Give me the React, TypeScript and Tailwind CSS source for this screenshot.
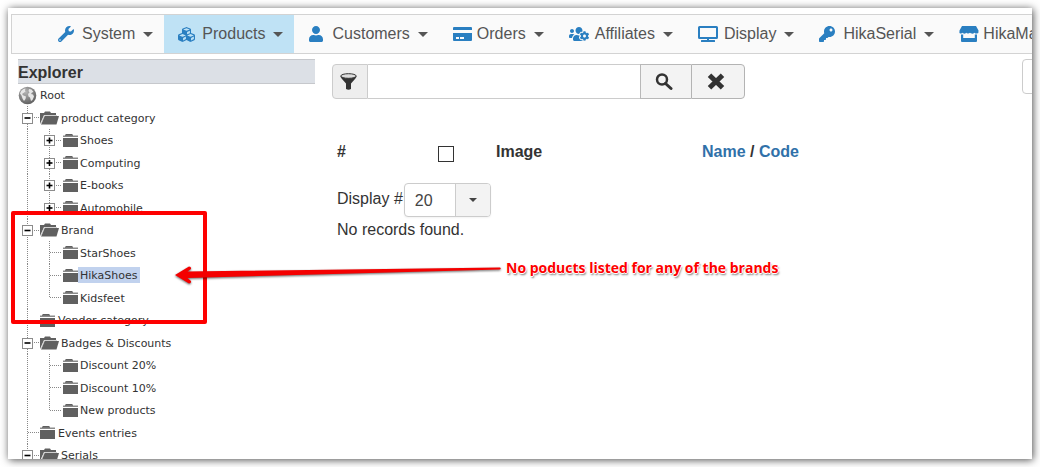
import type { ReactNode } from "react";
import {
  FaCubes,
  FaKey,
  FaTv,
  FaUser,
  FaUsersCog,
  FaWrench,
} from "react-icons/fa";

interface MenuItem {
  label: string;
  icon: ReactNode;
  active?: boolean;
  wide?: boolean;
}

interface TreeNode {
  label: string;
  depth: 1 | 2;
  toggle?: "open" | "closed";
  last?: boolean;
  selected?: boolean;
}

const menu: MenuItem[] = [
  { label: "System", icon: <FaWrench size={16} /> },
  { label: "Products", icon: <FaCubes size={17} />, active: true },
  { label: "Customers", icon: <FaUser size={16} /> },
  { label: "Orders", icon: <CardIcon /> },
  { label: "Affiliates", icon: <FaUsersCog size={20} />, wide: true },
  { label: "Display", icon: <FaTv size={20} />, wide: true },
  { label: "HikaSerial", icon: <FaKey size={16} /> },
  { label: "HikaMarket", icon: <StoreIcon /> },
];

const nodes: TreeNode[] = [
  { label: "product category", depth: 1, toggle: "open" },
  { label: "Shoes", depth: 2, toggle: "closed" },
  { label: "Computing", depth: 2, toggle: "closed" },
  { label: "E-books", depth: 2, toggle: "closed" },
  { label: "Automobile", depth: 2, toggle: "closed", last: true },
  { label: "Brand", depth: 1, toggle: "open" },
  { label: "StarShoes", depth: 2 },
  { label: "HikaShoes", depth: 2, selected: true },
  { label: "Kidsfeet", depth: 2, last: true },
  { label: "Vendor category", depth: 1 },
  { label: "Badges & Discounts", depth: 1, toggle: "open" },
  { label: "Discount 20%", depth: 2 },
  { label: "Discount 10%", depth: 2 },
  { label: "New products", depth: 2, last: true },
  { label: "Events entries", depth: 1 },
  { label: "Serials", depth: 1, toggle: "open" },
];

export default function App() {
  return (
    <div className="h-screen overflow-hidden bg-white p-2 font-['Liberation_Sans',Arial,sans-serif] text-base text-[#333]">
      <div className="relative h-full bg-white shadow-[1px_1px_8px_rgba(0,0,0,0.7)]">
        <div className="h-full overflow-hidden">
          <MainMenu />

          <div className="mt-[5px] flex">
            <Explorer />
            <main className="ml-[17px] min-w-0 flex-1">
              <Toolbar />
              <ProductTable />
            </main>
          </div>
        </div>

        <Annotation />
      </div>
    </div>
  );
}

function MainMenu() {
  return (
    <nav className="mt-1.5 ml-[3px] flex h-10 border-y border-l border-[#d3d3d3] bg-[#fafafa] pl-8">
      {menu.map((item) => (
        <a
          key={item.label}
          href="#"
          className={`flex shrink-0 items-center pr-[11px] pl-3.5 text-[#555] ${
            item.active ? "bg-[#bfe2f5]" : ""
          }`}
        >
          <span
            className={`flex shrink-0 text-[#2a7fc1] ${
              item.wide ? "w-[26px]" : "w-6"
            }`}
          >
            {item.icon}
          </span>
          {item.label}
          <Caret className="ml-2 text-[#555]" />
        </a>
      ))}
    </nav>
  );
}

function Explorer() {
  return (
    <aside className="ml-2.5 w-[297px] shrink-0">
      <h2 className="h-[25px] border-y border-[#c6c8cc] bg-[#dce0e6] leading-[26px] font-bold">
        Explorer
      </h2>

      <ul className="font-['DejaVu_Sans',Verdana,sans-serif] text-[11px] leading-[14px]">
        <li className="flex h-[22px] items-center">
          <GlobeIcon />
          <a href="#" className="ml-[3px] pt-0.5">
            Root
          </a>
        </li>
        {nodes.map((node) => (
          <TreeRow key={node.label} node={node} />
        ))}
      </ul>
    </aside>
  );
}

function TreeRow({ node }: { node: TreeNode }) {
  const open = node.toggle === "open";
  const joint = <Joint toggle={node.toggle} last={node.last} />;

  return (
    <li className="flex h-[22px] items-center even:h-[23px]">
      {node.depth === 2 && <Joint through />}
      {node.toggle ? (
        <button type="button" aria-label={`Toggle ${node.label}`} className="h-full">
          {joint}
        </button>
      ) : (
        joint
      )}
      {node.depth === 2 && <span className="w-px" />}
      <FolderIcon open={open} />
      <a
        href="#"
        className={`pt-0.5 ${node.selected ? "bg-[#c1d2ee] pr-[3px]" : ""} ${
          node.depth === 1 && !open ? "pl-[3px]" : "pl-0.5"
        }`}
      >
        {node.label}
      </a>
    </li>
  );
}

// dotted connector in front of a node, with the +/- box when it can be toggled
function Joint({
  toggle,
  last,
  through,
}: {
  toggle?: "open" | "closed";
  last?: boolean;
  through?: boolean;
}) {
  return (
    <svg className="block h-full w-[22px]" shapeRendering="crispEdges">
      <g stroke="#888" strokeDasharray="1 1">
        <line x1="9.5" x2="9.5" y1="0" y2={last ? "50%" : "100%"} />
        {!through && <line x1="10" x2="22" y1="50%" y2="50%" />}
      </g>
      {toggle && (
        <svg x="4" y="50%" width="11" height="11" overflow="visible">
          <g transform="translate(0 -5)">
            <rect x="0.5" y="0.5" width="10" height="10" fill="#fff" stroke="#8c8c8c" />
            <g fill="#000" shapeRendering="auto">
              <path d="M2.500 4.700h6v1.600h-6z" />
              {toggle === "closed" && <path d="M4.700 2.500h1.600v6H4.700z" />}
            </g>
          </g>
        </svg>
      )}
    </svg>
  );
}

function Toolbar() {
  return (
    <div className="flex items-start justify-between">
      <form className="mt-[5px] flex h-[35px]">
        <label
          htmlFor="filter"
          aria-label="Filter"
          className="flex w-9 items-center justify-center rounded-l border border-[#ccc] bg-[#eee] pr-1"
        >
          <svg width="17" height="17" viewBox="0 0 17 17">
            <path d="M.5 3c0 1 .5 2 1.500 3L6 10.500v5.500q2.500 1.500 5 0v-5.500L15 6c1-1 1.500-2 1.500-3z" fill="#333" />
            <ellipse cx="8.500" cy="3" rx="7.700" ry="2.300" fill="#ddd" stroke="#333" />
          </svg>
        </label>
        <input
          id="filter"
          type="text"
          className="w-[272px] border-y border-[#ccc] bg-white px-2 outline-none"
        />
        <button
          type="button"
          aria-label="Search"
          className="flex w-[51px] items-center justify-center border border-r-0 border-[#b8b8b8] bg-[#f3f3f3] pr-1"
        >
          <svg width="18" height="18" viewBox="0 0 18 18" fill="none" stroke="#333">
            <circle cx="7" cy="6.500" r="5" strokeWidth="2.500" />
            <path d="M10.500 10.500l5.500 5" strokeWidth="3" strokeLinecap="round" />
          </svg>
        </button>
        <button
          type="button"
          aria-label="Clear"
          className="flex w-[54px] items-center justify-center rounded-r border border-[#b3b3b3] bg-[#f3f3f3] pr-1"
        >
          <svg width="18" height="17" viewBox="0 0 18 17">
            <path d="M2.500 2.200l13 12.600M15.500 2.200l-13 12.600" stroke="#333" strokeWidth="5" />
          </svg>
        </button>
      </form>

      <button
        type="button"
        aria-label="Filter options"
        className="-mr-[30px] h-[35px] w-10 shrink-0 rounded border border-[#ccc] bg-white"
      />
    </div>
  );
}

function ProductTable() {
  return (
    <table className="mt-8 w-full table-fixed text-left leading-6">
      <thead>
        <tr>
          <th className="w-[101px] px-[5px] pt-[9px] pb-[7px]">#</th>
          <th className="w-[58px] px-[5px] pt-[9px] pb-[7px]">
            <input
              type="checkbox"
              aria-label="Select all"
              className="mt-1 block size-4 appearance-none border border-[#333] bg-white"
            />
          </th>
          <th className="w-[206px] px-[5px] pt-[9px] pb-[7px]">Image</th>
          <th className="px-[5px] pt-[9px] pb-[7px]">
            <a href="#" className="text-[#3071a9]">
              Name
            </a>{" "}
            /{" "}
            <a href="#" className="text-[#3071a9]">
              Code
            </a>
          </th>
        </tr>
      </thead>
      <tbody>
        <tr>
          <td colSpan={4} className="px-[5px] pt-3">
            <div className="flex">
              <label htmlFor="limit" className="pt-1 pr-px">
                Display #
              </label>
              <div className="relative">
                <select
                  id="limit"
                  className="block h-[34px] w-[87px] appearance-none rounded border border-[#ccc] bg-white pt-px pl-2.5 text-[#444] shadow-xs"
                >
                  <option>20</option>
                </select>
                <span className="pointer-events-none absolute inset-y-px right-px flex w-[35px] items-center justify-center rounded-r-[3px] border-l border-[#ccc] bg-[#f3f3f3]">
                  <Caret className="text-[#444]" small />
                </span>
              </div>
            </div>
            <p className="mt-px">No records found.</p>
          </td>
        </tr>
      </tbody>
    </table>
  );
}

// red callout drawn over the brand folders
function Annotation() {
  return (
    <div className="pointer-events-none absolute inset-0">
      <div className="absolute top-[203px] left-[3px] h-[113px] w-[196px] rounded-xs border-4 border-[#fe0000]" />
      <svg
        className="absolute top-[250px] left-[165px] drop-shadow-[0_1px_1px_rgba(0,0,0,0.6)]"
        width="330"
        height="34"
        viewBox="0 0 330 34"
      >
        <path
          d="M2 17 L16 8.500 Q18.500 8.500 18 11 L14.500 13.500 L327 9.500 Q328.500 10.500 327 11.500 L14.500 20 L18 23 Q18.500 25.500 16 25.500 Z"
          fill="#f40000"
        />
      </svg>
      <p className="absolute top-[250px] left-[498px] font-['Open_Sans','Noto_Sans',sans-serif] text-sm leading-5 font-bold whitespace-nowrap text-[#fe0000] [text-shadow:-1px_0_#fff,1px_0_#fff,0_-1px_#fff,0_1px_#fff,1px_2px_2px_#777]">
        No poducts listed for any of the brands
      </p>
    </div>
  );
}

function Caret({ className, small }: { className: string; small?: boolean }) {
  return (
    <svg
      className={`shrink-0 ${className}`}
      width={small ? 8 : 10}
      height={small ? 4 : 5}
      viewBox="0 0 10 5"
      fill="currentColor"
    >
      <path d="M0 0h10L5 5z" />
    </svg>
  );
}

function CardIcon() {
  return (
    <svg width="19" height="15" viewBox="0 0 19 15" fill="currentColor">
      <path d="M0 3V1q0-1 1-1h17q1 0 1 1v2zM0 6h19v7q0 1-1 1H1q-1 0-1-1zM3 10v2h3v-2zM7 10v2h4v-2z" fillRule="evenodd" />
    </svg>
  );
}

function StoreIcon() {
  return (
    <svg width="20" height="16" viewBox="0 0 20 16" fill="currentColor">
      <path d="M3 0h14l2.500 4.500q.5 2.500-1.500 3-1.500.3-2.500-.8-1.200 1.100-2.700.9-1.200-.1-1.800-.8-1 .9-2 .8-1.200-.1-1.800-.8-1 1-2.200.8-1.200-.2-1.800-.9-1 1.100-2 .8Q0 7 .5 4.500z" />
      <path d="M2 8.500h2.200V12h11.600V8.500H18v6.500q0 1-1 1H3q-1 0-1-1z" />
    </svg>
  );
}

function GlobeIcon() {
  return (
    <svg className="shrink-0" width="19" height="19" viewBox="0 0 19 19">
      <defs>
        <radialGradient id="globe" cx="0.4" cy="0.3" r="0.75">
          <stop offset="0" stopColor="#b5b5b5" />
          <stop offset="1" stopColor="#5c5c5c" />
        </radialGradient>
      </defs>
      <circle cx="9.500" cy="9.500" r="8.800" fill="url(#globe)" />
      <path d="M3 5l2.500-2 2-.5-.5 2 .5 1-2 1.500-1.500 1 1.500 1.500 2.500 1-.5 2.500-1.500 2-1.500-2.500-1-3L2 7.500zM11 3l2.500.5 2 2.500-1.500.5-1 1.500 2 .5 1 2-1.500 3.500-1.500 1-1-3.500-1.500-1-.5-2.500 1.500-1.500-1-1.500z" fill="#e6e6e6" />
    </svg>
  );
}

function FolderIcon({ open }: { open: boolean }) {
  return open ? (
    <svg className="shrink-0" width="19" height="14" viewBox="0 0 19 14">
      <path d="M0 2h4l1-1.500h5L11 2h5v2H4L0 13z" fill="#606060" />
      <path d="M4.500 5H19l-2.500 8.500H1z" fill="#606060" />
      <path d="M1 13L4.500 4.500H17" stroke="#c4c4c4" strokeWidth="0.800" fill="none" />
    </svg>
  ) : (
    <svg className="shrink-0" width="15" height="13" viewBox="0 0 15 13">
      <path d="M2 1l1-1h6l1 1v1H2z" fill="#606060" />
      <path d="M0 1.500h15V3H0z" fill="#8a8a8a" />
      <path d="M0 4h15v9H0z" fill="#606060" />
    </svg>
  );
}
